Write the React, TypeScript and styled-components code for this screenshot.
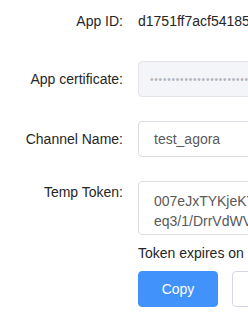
import styled, { createGlobalStyle } from 'styled-components';

const GlobalStyle = createGlobalStyle`
  html, body {
    margin: 0;
    padding: 0;
    background: #ffffff;
    overflow: hidden;
  }
  body {
    font-family: "Liberation Sans", Arial, Helvetica, sans-serif;
    font-size: 14px;
    color: #262626;
  }
`;

const Page = styled.div`
  width: 248px;
  height: 318px;
  overflow: hidden;
  padding-top: 5px;
  box-sizing: border-box;
`;

const Form = styled.div`
  display: flex;
  flex-direction: column;
  gap: 24px;
`;

const Row = styled.div<{ $top?: boolean }>`
  display: flex;
  align-items: ${({ $top }) => ($top ? 'flex-start' : 'center')};
  gap: 15px;
  min-height: 32px;
`;

const Label = styled.label<{ $top?: boolean }>`
  flex: 0 0 123px;
  text-align: right;
  line-height: 22px;
  white-space: nowrap;
  color: #262626;
  padding-top: ${({ $top }) => ($top ? '0' : '0')};
`;

const Control = styled.div`
  flex: 0 0 330px;
  display: flex;
  flex-direction: column;
`;

const Plain = styled.span`
  line-height: 22px;
  color: #262626;
  white-space: nowrap;
`;

const Field = styled.div<{ $disabled?: boolean }>`
  box-sizing: border-box;
  height: 36px;
  border: 1px solid ${({ $disabled }) => ($disabled ? '#e3e4ea' : '#dcdce2')};
  border-radius: 4px;
  background: ${({ $disabled }) => ($disabled ? '#f4f5f9' : '#ffffff')};
  padding: 0 ${({ $disabled }) => ($disabled ? '11px' : '15px')};
  display: flex;
  align-items: center;
  color: #595959;
  white-space: nowrap;
  overflow: hidden;
`;

const Dots = styled.span`
  font-size: 10px;
  letter-spacing: 0.8px;
  color: #b4b6bd;
`;

const TokenBox = styled.div`
  box-sizing: border-box;
  height: 54px;
  border: 1px solid #dcdce2;
  border-radius: 4px;
  padding: 9px 15px 0;
  color: #595959;
  line-height: 20px;
  overflow: hidden;
`;

const TokenLine = styled.div`
  white-space: nowrap;
`;

const Hint = styled.div`
  margin-top: 7px;
  line-height: 22px;
  color: #262626;
  white-space: nowrap;
`;

const Buttons = styled.div`
  margin-top: 7px;
  display: flex;
  gap: 14px;
`;

const Button = styled.button<{ $primary?: boolean }>`
  box-sizing: border-box;
  height: 36px;
  min-width: 80px;
  padding: 0 15px;
  border-radius: 4px;
  font-family: "Liberation Sans", Arial, sans-serif;
  font-size: 14px;
  cursor: pointer;
  border: 1px solid ${({ $primary }) => ($primary ? '#4192fb' : '#d7d6e6')};
  background: ${({ $primary }) => ($primary ? '#4192fb' : '#ffffff')};
  color: ${({ $primary }) => ($primary ? '#ffffff' : '#262626')};
`;

export default function App() {
  return (
    <Page>
      <GlobalStyle />
      <Form>
        <Row>
          <Label>App ID:</Label>
          <Control>
            <Plain>d1751ff7acf54185a6e2b9c0f3d7e412</Plain>
          </Control>
        </Row>
        <Row>
          <Label>App certificate:</Label>
          <Control>
            <Field $disabled>
              <Dots>••••••••••••••••••••••••••••••••••••••••</Dots>
            </Field>
          </Control>
        </Row>
        <Row>
          <Label>Channel Name:</Label>
          <Control>
            <Field>test_agora</Field>
          </Control>
        </Row>
        <Row $top>
          <Label $top>Temp Token:</Label>
          <Control>
            <TokenBox>
              <TokenLine>007eJxTYKjeKYnqWvPzL4mMjE0tLY2NTAzNTc</TokenLine>
              <TokenLine>eq3/1/DrrVdWVxyBtPGtWHpUpwS8cSVbpyoL</TokenLine>
              <TokenLine>f4H0XkM9pVHR5tBLy3gDAAVcJ6o=</TokenLine>
            </TokenBox>
            <Hint>Token expires on 2024-06-13 10:24:51</Hint>
            <Buttons>
              <Button $primary>Copy</Button>
              <Button>Regenerate</Button>
            </Buttons>
          </Control>
        </Row>
      </Form>
    </Page>
  );
}
